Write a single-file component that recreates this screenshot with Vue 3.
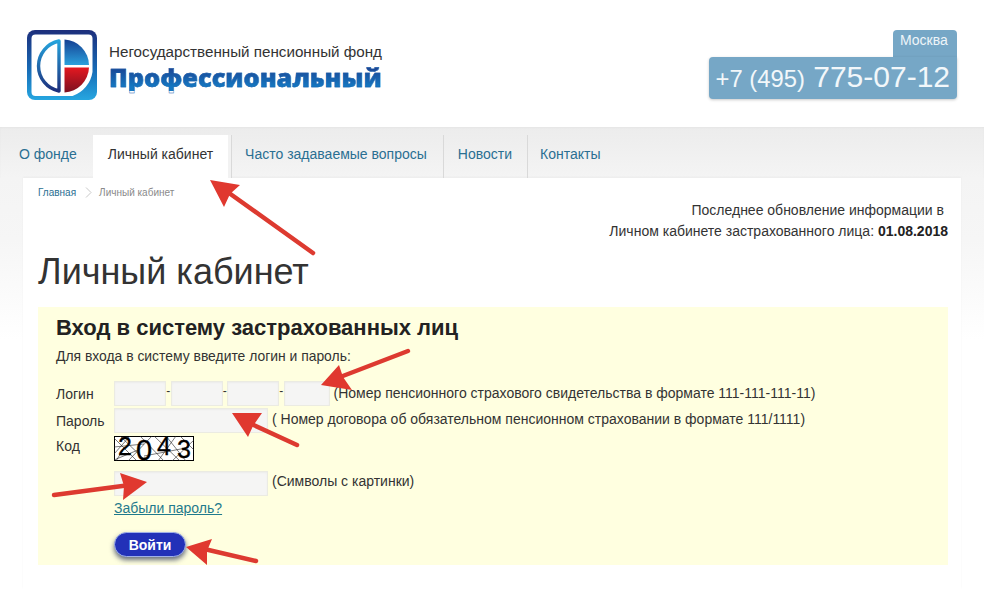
<script setup>
const navItems = [
  { label: 'О фонде' },
  { label: 'Личный кабинет', active: true },
  { label: 'Часто задаваемые вопросы' },
  { label: 'Новости' },
  { label: 'Контакты' },
]
const arrows = [
  { line: '313,253 222,188', head: '210,180 240,185 230,194 224,207' },
  { line: '408,351 335,379', head: '321,385 339,365 343,377 352,390' },
  { line: '297,445 245,421', head: '232,413 262,413 253,426 248,437' },
  { line: '54,495 130,485', head: '147,482 120,473 124,486 123,500' },
  { line: '256,561 200,548', head: '186,547 212,539 207,551 207,565' },
]
</script>

<template>
  <div class="page">
    <header class="top">
      <div class="brand">
        <svg class="logo" width="72" height="72" viewBox="0 0 72 72">
          <defs>
            <linearGradient id="frame" x1="0" y1="0" x2="0" y2="1">
              <stop offset="0" stop-color="#1d2f7c" />
              <stop offset="0.55" stop-color="#1769b4" />
              <stop offset="1" stop-color="#26a6e0" />
            </linearGradient>
            <linearGradient id="dOutline" x1="0" y1="0" x2="0" y2="1">
              <stop offset="0" stop-color="#25a3dc" />
              <stop offset="1" stop-color="#1d2f7c" />
            </linearGradient>
            <linearGradient id="blueQ" x1="0" y1="0" x2="0" y2="1">
              <stop offset="0" stop-color="#153f92" />
              <stop offset="1" stop-color="#2ba0dc" />
            </linearGradient>
            <linearGradient id="redQ" x1="0" y1="0" x2="0" y2="1">
              <stop offset="0" stop-color="#e41820" />
              <stop offset="1" stop-color="#7c1020" />
            </linearGradient>
          </defs>
          <rect x="1" y="1" width="70" height="70" rx="8" fill="url(#frame)" />
          <path d="M5.5 9.5a4 4 0 0 1 4-4h53a4 4 0 0 1 4 4V43a30 30 0 0 1-20 24H9.5a4 4 0 0 1-4-4Z" fill="#fff" />
          <path d="M33 12 A25.5 25.5 0 0 0 33 62 Z" fill="none" stroke="url(#dOutline)" stroke-width="3.4" stroke-linejoin="round" />
          <path d="M38.5 10.5 A26 26 0 0 1 63 36 H38.5 Z" fill="url(#blueQ)" />
          <path d="M38.5 38.5 H63 A26 26 0 0 1 38.5 63.5 Z" fill="url(#redQ)" />
        </svg>
        <div class="brand-text">
          <div class="brand-sub">Негосударственный пенсионный фонд</div>
          <div class="brand-name">Профессиональный</div>
        </div>
      </div>
      <div class="contact">
        <div class="city">Москва</div>
        <div class="phone"><span class="code">+7 (495)</span> 775-07-12</div>
      </div>
    </header>

    <nav class="nav">
      <a v-for="item in navItems" :key="item.label" class="nav-item" :class="{ active: item.active }">{{ item.label }}</a>
    </nav>

    <main class="content">
      <div class="crumbs">
        <a class="crumb-link">Главная</a>
        <svg width="7" height="11" viewBox="0 0 7 11" class="crumb-sep"><path d="M1 .5 6 5.5 1 10.5" fill="none" stroke="#c8c8c8" /></svg>
        <span>Личный кабинет</span>
      </div>
      <p class="updated">
        <span class="updated-first">Последнее обновление информации в</span><br />
        Личном кабинете застрахованного лица: <b>01.08.2018</b>
      </p>
      <h1 class="title">Личный кабинет</h1>

      <section class="panel">
        <h2 class="panel-title">Вход в систему застрахованных лиц</h2>
        <p class="hint">Для входа в систему введите логин и пароль:</p>

        <div class="row row-login">
          <label class="lbl">Логин</label>
          <span class="box w52"></span><i class="dash">-</i>
          <span class="box w52"></span><i class="dash">-</i>
          <span class="box w52"></span><i class="dash">-</i>
          <span class="box w46"></span>
          <span class="note">(Номер пенсионного страхового свидетельства в формате 111-111-111-11)</span>
        </div>
        <div class="row row-pass">
          <label class="lbl">Пароль</label>
          <span class="box w154"></span>
          <span class="note">( Номер договора об обязательном пенсионном страховании в формате 111/1111)</span>
        </div>
        <div class="row row-code">
          <label class="lbl lbl-code">Код</label>
          <svg class="captcha" width="80" height="25" viewBox="0 0 80 25">
            <rect x="0.5" y="0.5" width="79" height="24" fill="#fff" stroke="#000" />
            <g stroke="#222" stroke-width="0.6" fill="none">
              <path d="M0 2 22 24M6 0 32 25M0 18 16 0M14 25 38 0M26 0 50 25M44 25 62 0M40 0 66 25M58 25 80 4M66 0 80 14M0 11 30 8M30 20 72 12M2 25 10 12M0 24 24 14M52 0 72 25" />
            </g>
            <text x="4" y="19" class="cap">2</text>
            <text x="22" y="24" class="cap cap-big">0</text>
            <text x="43" y="19" class="cap">4</text>
            <text x="63" y="22" class="cap">3</text>
          </svg>
        </div>
        <div class="row row-sym">
          <span class="lbl"></span>
          <span class="box w154"></span>
          <span class="note">(Символы с картинки)</span>
        </div>
        <a class="forgot">Забыли пароль?</a>
        <button class="enter" type="button">Войти</button>
      </section>
    </main>

    <svg class="marks" width="984" height="589" viewBox="0 0 984 589">
      <g v-for="(a, i) in arrows" :key="i">
        <polyline :points="a.line" fill="none" stroke="#dd3a30" stroke-width="4.5" stroke-linecap="round" />
        <polygon :points="a.head" fill="#e0382f" />
      </g>
    </svg>
  </div>
</template>

<style>
html, body { margin: 0; background: #fff; }
</style>

<style scoped>
.page {
  position: relative;
  width: 984px;
  height: 589px;
  overflow: hidden;
  font-family: "Liberation Sans", Arial, sans-serif;
  color: #333;
  background: linear-gradient(#ececec 127px, #f4f4f4 178px, #f6f6f6 240px, #fff 340px);
}
.top {
  height: 127px;
  box-sizing: border-box;
  background: #fff;
  display: flex;
  justify-content: space-between;
  padding: 29px 27px 0 26px;
}
.brand { display: flex; align-items: flex-start; }
.logo { display: block; }
.brand-text { margin-left: 11px; padding-top: 14px; }
.brand-sub { font-size: 15.2px; line-height: 18px; color: #333; white-space: nowrap; }
.brand-name {
  font-family: "Open Sans", sans-serif;
  font-weight: 800;
  font-size: 25.4px;
  line-height: 28px;
  margin-top: 2px;
  white-space: nowrap;
  background: linear-gradient(#1b4795 20%, #1478c2 85%);
  -webkit-background-clip: text;
  background-clip: text;
  color: transparent;
  -webkit-text-stroke: 0.4px #1a62ae;
}
.contact { display: flex; flex-direction: column; align-items: flex-end; }
.city {
  background: #76a7c6;
  color: #eef5f9;
  font-size: 14px;
  line-height: 21px;
  height: 27px;
  width: 64px;
  box-sizing: border-box;
  padding-left: 7px;
  border-radius: 4px 4px 0 0;
  margin-top: 1px;
}
.phone {
  background: #76a7c6;
  color: #f2f7fa;
  font-size: 30px;
  line-height: 40px;
  height: 42px;
  padding: 0 7px;
  border-radius: 4px 0 4px 4px;
  box-shadow: 0 1px 3px rgba(0, 0, 0, 0.22);
  white-space: nowrap;
}
.code { font-size: 23.8px; }
.nav {
  height: 51px;
  box-sizing: border-box;
  display: flex;
  align-items: flex-end;
  padding-left: 4px;
  background: linear-gradient(#ececec, #f4f4f4);
  box-shadow: inset 0 1px 2px rgba(0, 0, 0, 0.03);
}
.nav-item {
  display: block;
  height: 43px;
  line-height: 39px;
  padding: 0 15px;
  font-size: 14px;
  color: #2a6f92;
  box-sizing: border-box;
  border-right: 1px solid #d9d9d9;
  white-space: nowrap;
}
.nav-item:first-child { border-right: 0; padding-right: 16px; }
.nav-item.active {
  background: #fff;
  color: #333;
  border-right: 0;
  margin-right: 2px;
  box-shadow: 3px 0 0 #f2f2f2, 4px 0 0 #d9d9d9;
}
.nav-item:nth-child(3) { padding-right: 16px; }
.nav-item:nth-child(4) { padding-left: 14px; }
.nav-item:last-child { border-right: 0; padding-left: 12px; }
.content {
  margin: 0 23px;
  background: #fff;
  height: 411px;
  padding: 0 13px 0 15px;
  box-sizing: border-box;
  box-shadow: 0 -1px 2px rgba(0, 0, 0, 0.04);
}
.crumbs {
  display: flex;
  align-items: center;
  height: 28px;
  font-size: 10px;
  color: #8a8a8a;
}
.crumb-link { color: #2a6f92; }
.crumb-sep { margin: 0 7px 0 9px; }
.updated {
  margin: -6px 0 0;
  font-size: 14px;
  line-height: 21px;
  text-align: right;
  color: #333;
}
.updated-first { margin-right: 4px; }
.updated b { color: #222; }
.title {
  margin: 9px 0 0;
  font-size: 36px;
  line-height: 42px;
  font-weight: 400;
  color: #333;
}
.panel {
  margin-top: 14px;
  height: 258px;
  box-sizing: border-box;
  padding: 9px 18px 0;
  background: #ffffe0;
}
.panel-title {
  margin: 0;
  font-size: 22px;
  line-height: 23px;
  color: #222;
}
.hint { margin: 10px 0 0; font-size: 13.9px; line-height: 15px; color: #333; }
.row { display: flex; align-items: flex-start; }
.row-login { margin-top: 17px; }
.row-login .note { margin-top: 2px; }
.row-pass { margin-top: 2px; }
.row-pass .note { margin-top: 1px; }
.row-code { margin-top: 3px; }
.row-sym { margin-top: 10px; }
.lbl { width: 58px; flex: none; font-size: 14px; line-height: 24px; padding-top: 1px; box-sizing: border-box; }
.lbl-code { line-height: 18px; }
.box {
  display: block;
  height: 25px;
  box-sizing: border-box;
  background: #f5f5f4;
  border: 1px solid #ebebe2;
  box-shadow: inset 0 1px 2px rgba(0, 0, 0, 0.04);
}
.w52 { width: 52px; }
.w46 { width: 46px; }
.w154 { width: 154px; }
.dash { font-style: normal; width: 4.5px; font-size: 12px; line-height: 20px; text-align: center; }
.note { margin-left: 4px; font-size: 14px; line-height: 20px; white-space: nowrap; color: #333; }
.captcha { display: block; overflow: visible; }
.cap { font-family: "Liberation Sans", sans-serif; font-size: 25px; fill: #000; stroke: #000; stroke-width: 0.3px; }
.cap-big { font-size: 29px; }
.forgot {
  display: block;
  margin: 3px 0 0 58px;
  font-size: 14px;
  line-height: 18px;
  color: #1f7a8c;
  text-decoration: underline;
  width: max-content;
}
.enter {
  display: block;
  margin: 15px 0 0 58px;
  width: 72px;
  height: 25px;
  padding: 0;
  border: 1px solid #9fb0e8;
  border-radius: 13px;
  background: #2231b8;
  color: #fff;
  font: bold 14px "Liberation Sans", Arial, sans-serif;
  box-shadow: 0 3px 5px rgba(20, 30, 70, 0.65);
}
.marks { position: absolute; left: 0; top: 0; pointer-events: none; }
</style>
